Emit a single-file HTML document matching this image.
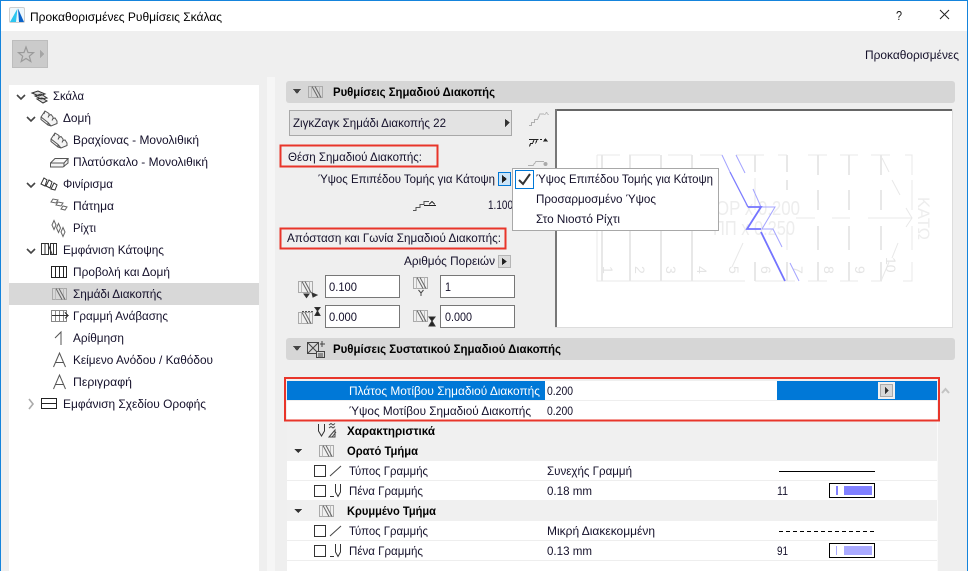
<!DOCTYPE html>
<html lang="el"><head><meta charset="utf-8"><title>Προκαθορισμένες Ρυθμίσεις Σκάλας</title>
<style>
html,body{margin:0;padding:0;width:968px;height:571px;overflow:hidden;background:#f0f0f0}
svg{display:block}
text{font-family:"Liberation Sans","DejaVu Sans",sans-serif;font-size:12px;fill:#14102a}
.b{font-weight:bold;fill:#000}
.w{fill:#fff}
.p{fill:none;stroke:#e8e8e8;stroke-width:1}
.p2{fill:none;stroke:#e8e8e8;stroke-width:2}
.t{fill:none;stroke:#a4a4ff;stroke-width:1}
.d{fill:#e4e4e4;font-size:14px}
</style></head>
<body>
<svg width="968" height="571" viewBox="0 0 968 571" xmlns="http://www.w3.org/2000/svg" shape-rendering="crispEdges">
<defs>
<g id="brk" shape-rendering="geometricPrecision"><rect x="0.5" y="0.5" width="14" height="11" fill="none" stroke="#aaa"/><path d="M3.500 .5V11.500M11.500 .5V11.500" stroke="#bbb" fill="none"/><path d="M4 .5L10 11.500M7 .5L13 11.500" stroke="#666" fill="none"/></g>
<g id="stair" shape-rendering="geometricPrecision" fill="#f4f4f4" stroke="#555"><path d="M1 7L5 1L9 3.500V5.500L11 4.500L13 7V8.500L15 8L17 11V13.500L11 16L8 15L1 9.500Z"/><path d="M1 7L8 12.500L11 16M8 12.500L8 15M5 1L4 4M9 5.500L8 7.500M13 8.500L12 10.500" fill="none"/></g>
<g id="chev" shape-rendering="geometricPrecision"><path d="M0 0L4 4L8 0" fill="none" stroke="#444" stroke-width="1.600"/></g>
<g id="cb"><rect x="314.500" y="0.500" width="11" height="11" fill="#fff" stroke="#333"/></g>
<g id="pen" shape-rendering="geometricPrecision" fill="none" stroke="#333"><path d="M5.500 0V8L8 12.500L10.500 8V0"/><path d="M0 12.500H4"/></g>
</defs>

<!-- window -->
<rect width="968" height="571" fill="#efefef"/>
<rect width="968" height="31" fill="#fff"/>
<rect x="0" y="0" width="968" height="1" fill="#1584dc"/>
<rect x="0" y="0" width="1" height="571" fill="#1584dc"/>
<rect x="967" y="0" width="1" height="571" fill="#1584dc"/>

<!-- title -->
<g shape-rendering="geometricPrecision">
<rect x="9.500" y="7.500" width="15" height="15" rx="1.500" fill="#eef8fd" stroke="#cfcfcf"/>
<path d="M10 22L17.500 8.500L16 22Z" fill="#2cc6f0"/>
<path d="M18 8.500L24 22H19Z" fill="#0a62c8"/>
</g>
<text x="30" y="21" textLength="192" lengthAdjust="spacingAndGlyphs" style="fill:#000">Προκαθορισμένες Ρυθμίσεις Σκάλας</text>
<text x="896" y="20" style="font-size:13px;fill:#111" textLength="6" lengthAdjust="spacingAndGlyphs">?</text>
<path d="M940 10L949 19M949 10L940 19" stroke="#222" fill="none" shape-rendering="geometricPrecision"/>

<!-- star button -->
<rect x="12.500" y="40.500" width="35" height="27" fill="#cbcbcb" stroke="#bdbdbd"/>
<path d="M26 47L28 52.500L33.500 52.700L29.300 56.200L30.800 61.500L26 58.500L21.200 61.500L22.700 56.200L18.500 52.700L24 52.500Z" fill="none" stroke="#9a9a9a" stroke-width="1.200" shape-rendering="geometricPrecision"/>
<path d="M40 50L44 54L40 58Z" fill="#a5a5a5"/>
<text x="865" y="59" textLength="94" lengthAdjust="spacingAndGlyphs">Προκαθορισμένες</text>

<!-- tree -->
<rect x="9" y="85" width="250" height="486" fill="#fff"/>
<rect x="9" y="283" width="250" height="22" fill="#d8d8d8"/>
<rect x="267" y="77" width="8" height="494" fill="#f6f6f6"/>

<use href="#chev" x="17" y="95"/>
<use href="#chev" x="27" y="117"/>
<use href="#chev" x="27" y="183"/>
<use href="#chev" x="27" y="249"/>
<path d="M29 399L33 404L29 409" fill="none" stroke="#aaa" stroke-width="1.600" shape-rendering="geometricPrecision"/>

<g shape-rendering="geometricPrecision" fill="none" stroke="#333">
<path d="M32 93L38 91L45 94L39 96ZM35 96L41 94L47 98L41 99ZM37 99L42 98L47 101L43 103Z" fill="#ddd"/>
<path d="M41 184L44 178L47 180L45 186ZM46 186L49 180L52 182L50 188ZM51 189L54 183L57 185L55 190Z" stroke="#333"/>
<path d="M51 202L53 199L58 200L56 203ZM56 205L58 202L63 203L61 206ZM61 209L63 206L67 207L65 210Z" stroke="#666"/>
<path d="M54 220.500L56 225L54 229.500L52 225ZM58.500 223.500L60.500 228L58.500 232.500L56.500 228ZM63 227.500L65 232L63 236.500L61 232Z" stroke="#666"/>
<path d="M55 338L61 332V345" stroke="#555"/>
<path d="M53.500 367L59.500 353L65.500 367M55.500 362.500H63.500" stroke="#555"/>
<path d="M53.500 389L59.500 375L65.500 389M55.500 384.500H63.500" stroke="#555"/>
</g>
<use href="#stair" x="40" y="110"/>
<use href="#stair" x="50" y="132"/>
<g shape-rendering="geometricPrecision" fill="none" stroke="#555"><path d="M50.500 163L55 158.500H68L64 163H50.500V167H63L68 163V158.500M64 163V167" fill="#f4f4f4"/></g>
<g fill="none" stroke="#333"><path d="M41.500 243.500V254.500H48.500V243.500ZM45 244V254M50.500 243.500H56.500V254.500H50.500ZM53.500 244V254"/></g>
<path d="M48 244L52 254" fill="none" stroke="#333" shape-rendering="geometricPrecision"/>
<g fill="none" stroke="#222"><rect x="51.500" y="266.500" width="15" height="11"/><path d="M55.500 267V277M59.500 267V277M63.500 267V277"/></g>
<use href="#brk" x="52" y="288"/>
<g fill="none" stroke="#888"><rect x="51.500" y="310.500" width="15" height="11"/><path d="M55.500 311V321M59.500 311V321M63.500 311V321"/></g>
<path d="M52 315.500H68L65 312.500M68 315.500L65 318.500" fill="none" stroke="#333"/>
<g fill="none" stroke="#222"><rect x="41.500" y="398.500" width="15" height="10"/><path d="M42 403.500H56"/></g>

<text x="53" y="100" textLength="31" lengthAdjust="spacingAndGlyphs">Σκάλα</text>
<text x="63" y="122" textLength="28" lengthAdjust="spacingAndGlyphs">Δομή</text>
<text x="73" y="144" textLength="126" lengthAdjust="spacingAndGlyphs">Βραχίονας - Μονολιθική</text>
<text x="73" y="166" textLength="135" lengthAdjust="spacingAndGlyphs">Πλατύσκαλο - Μονολιθική</text>
<text x="63" y="188" textLength="50" lengthAdjust="spacingAndGlyphs">Φινίρισμα</text>
<text x="73" y="210" textLength="41" lengthAdjust="spacingAndGlyphs">Πάτημα</text>
<text x="73" y="232" textLength="23" lengthAdjust="spacingAndGlyphs">Ρίχτι</text>
<text x="63" y="254" textLength="101" lengthAdjust="spacingAndGlyphs">Εμφάνιση Κάτοψης</text>
<text x="73" y="276" textLength="97" lengthAdjust="spacingAndGlyphs">Προβολή και Δομή</text>
<text x="73" y="298" textLength="89" lengthAdjust="spacingAndGlyphs">Σημάδι Διακοπής</text>
<text x="73" y="320" textLength="95" lengthAdjust="spacingAndGlyphs">Γραμμή Ανάβασης</text>
<text x="73" y="342" textLength="51" lengthAdjust="spacingAndGlyphs">Αρίθμηση</text>
<text x="73" y="364" textLength="140" lengthAdjust="spacingAndGlyphs">Κείμενο Ανόδου / Καθόδου</text>
<text x="73" y="386" textLength="59" lengthAdjust="spacingAndGlyphs">Περιγραφή</text>
<text x="63" y="408" textLength="143" lengthAdjust="spacingAndGlyphs">Εμφάνιση Σχεδίου Οροφής</text>

<!-- header 1 -->
<rect x="286" y="81" width="669" height="22" rx="3" fill="#d6d6d6" shape-rendering="geometricPrecision"/>
<path d="M293 89H301L297 94Z" fill="#444"/>
<use href="#brk" x="308" y="86"/>
<text class="b" x="333" y="96" textLength="162" lengthAdjust="spacingAndGlyphs">Ρυθμίσεις Σημαδιού Διακοπής</text>

<!-- dropdown -->
<rect x="289.500" y="110.500" width="222" height="25" fill="#e3e3e3" stroke="#a8a8a8"/>
<text x="293" y="127" textLength="153" lengthAdjust="spacingAndGlyphs">ZιγκZαγκ Σημάδι Διακοπής 22</text>
<path d="M505 119L510 122.500L505 127Z" fill="#333"/>

<!-- side icons -->
<g fill="none">
<path d="M529 125.500H531.500V122.500H534.500V119.500H537.500L540 114H544" stroke="#b0b0b0"/>
<path d="M544.500 115L546.500 112.500L548.500 115" stroke="#b8b8b8"/>
<path d="M529 139.500H538.500M540 139.500H542" stroke="#222"/>
<path d="M534 140L532.500 143.500H530.500L529.500 146.500M537 140L535.500 143.500" stroke="#222"/>
<path d="M543 141.500L545.500 138L548 141.500Z" fill="#222"/>
<path d="M528 165.500H533L536 161.500H544" stroke="#b0b0b0"/>
<circle cx="545.500" cy="164" r="2" fill="#aaa" shape-rendering="geometricPrecision"/>
</g>

<!-- preview -->
<rect x="555" y="109" width="398" height="219" fill="#fff"/>
<rect x="555" y="109" width="398" height="2" fill="#666"/>
<rect x="555" y="109" width="2" height="219" fill="#777"/>
<rect x="952" y="109" width="1" height="219" fill="#ddd"/>
<rect x="555" y="327" width="398" height="1" fill="#ddd"/>
<g>
<path class="p" d="M597 155H620M629 155H660M668 155H692M700 155H722M736 155H764M778 155H787M808 155H827M840 155H858M871 155H890M905 155H912V175M912 180V210M912 226V250M912 262V281H903M882 281H871M858 281H840M827 281H808M795 281H755M745 281H597V155"/>
<path class="p2" d="M602 155V281M630 155V172M630 180V281M661 155V281M692 155V281M755 155V172M755 262V281M787 155V172M787 180V190M787 262V281M818 155V175M818 190V210M818 226V250M818 262V281M849 155V175M849 190V210M849 226V250M849 262V281M881 155V175M881 190V210M881 226V250M881 262V281"/>
<path class="p" d="M597 218H712M796 218H815M832 218H850M868 218H912M755 178V210M787 225V250"/>
<g shape-rendering="geometricPrecision"><path class="p" d="M906 208L912 218L906 227M882 158L889 172M892 180L900 195M898 243L892 258M889 262L881 281M732 267L743 243"/></g>
<text class="d" style="font-size:20px;fill:#ededed" x="716" y="215" textLength="84" lengthAdjust="spacingAndGlyphs">ΟΡ x 0.200</text>
<text class="d" style="font-size:20px;fill:#ededed" x="713" y="235" textLength="82" lengthAdjust="spacingAndGlyphs">ΠΠ x 0.250</text>
<text class="d" style="font-size:17px;fill:#ededed" transform="translate(918,197) rotate(90)" textLength="43" lengthAdjust="spacingAndGlyphs">ΚΑΤΩ</text>
<g shape-rendering="geometricPrecision">
<text class="d" transform="translate(603,266) rotate(90)">1</text>
<text class="d" transform="translate(635,266) rotate(90)">2</text>
<text class="d" transform="translate(666,266) rotate(90)">3</text>
<text class="d" transform="translate(697,266) rotate(90)">4</text>
<text class="d" transform="translate(729,266) rotate(90)">5</text>
<text class="d" transform="translate(761,266) rotate(90)">6</text>
<text class="d" transform="translate(793,266) rotate(90)">7</text>
<text class="d" transform="translate(824,266) rotate(90)">8</text>
<text class="d" transform="translate(855,266) rotate(90)">9</text>
<text class="d" transform="translate(886,257) rotate(90)">10</text>
</g>
</g>
<g shape-rendering="geometricPrecision">
<path class="t" d="M736 155L745 173M753 189L761 207H775L762 229H773L782 247M790 263L799 281M722 155L730 172"/>
<path d="M730 172L748 207" fill="none" stroke="#7c7cff" stroke-width="1.300"/>
<path d="M748 207H761L747 229H761M761 232L785 281" fill="none" stroke="#7474ff" stroke-width="1.800"/>
</g>

<!-- left controls -->
<rect x="280.500" y="145.500" width="157" height="21" fill="none" stroke="#e8352a" stroke-width="2"/>
<text x="288" y="161" textLength="134" lengthAdjust="spacingAndGlyphs">Θέση Σημαδιού Διακοπής:</text>
<text x="318" y="183" textLength="177" lengthAdjust="spacingAndGlyphs">Ύψος Επιπέδου Τομής για Κάτοψη</text>
<rect x="498.500" y="172.500" width="12" height="13" fill="#cce4f7" stroke="#0078d7"/>
<path d="M502 175L507 179L502 183Z" fill="#222"/>
<g fill="none" stroke="#555"><path d="M413 210.500H416V207.500H420V204.500H424V201.500H429"/><path d="M424 205.500H436" stroke="#222"/><path d="M429 204.500L432 201.500L435 204.500" stroke="#333"/></g>
<text x="488" y="209" textLength="25" lengthAdjust="spacingAndGlyphs">1.100</text>

<rect x="280.500" y="228.500" width="225" height="20" fill="none" stroke="#e8352a" stroke-width="2"/>
<text x="287" y="242" textLength="214" lengthAdjust="spacingAndGlyphs">Απόσταση και Γωνία Σημαδιού Διακοπής:</text>
<text x="404" y="265" textLength="91" lengthAdjust="spacingAndGlyphs">Αριθμός Πορειών</text>
<rect x="498.500" y="255.500" width="12" height="12" fill="#dcdcdc" stroke="#b5b5b5"/>
<path d="M502 258L507 261.500L502 265Z" fill="#222"/>

<g fill="#fff" stroke="#777">
<rect x="325.500" y="275.500" width="74" height="22"/>
<rect x="440.500" y="275.500" width="74" height="22"/>
<rect x="325.500" y="305.500" width="74" height="22"/>
<rect x="440.500" y="305.500" width="74" height="22"/>
</g>
<text x="329" y="291" textLength="28" lengthAdjust="spacingAndGlyphs">0.100</text>
<text x="445" y="291" textLength="6" lengthAdjust="spacingAndGlyphs">1</text>
<text x="329" y="321" textLength="28" lengthAdjust="spacingAndGlyphs">0.000</text>
<text x="445" y="321" textLength="27" lengthAdjust="spacingAndGlyphs">0.000</text>
<use href="#brk" x="298" y="281"/>
<path d="M304 294L306.500 297.500L309 294ZM312 293L317 295L313 297Z" fill="#333" stroke="#333" shape-rendering="geometricPrecision"/>
<use href="#brk" x="413" y="277"/>
<path d="M418.500 290L421 293L423.500 290M421 293V296" fill="none" stroke="#444" shape-rendering="geometricPrecision"/>
<use href="#brk" x="298" y="312"/>
<path d="M302 311.500H314" fill="none" stroke="#555" stroke-dasharray="2 1"/>
<path d="M315 307.500H320L317.500 311L320 315.500H315L317.500 311Z" fill="#222" stroke="#333" shape-rendering="geometricPrecision"/>
<use href="#brk" x="413" y="310"/>
<path d="M429 317H435L432 321L435 326H429L432 321Z" fill="#222" stroke="#333" shape-rendering="geometricPrecision"/>

<!-- header 2 -->
<rect x="286" y="338" width="669" height="22" rx="3" fill="#d6d6d6" shape-rendering="geometricPrecision"/>
<path d="M293 346H301L297 351Z" fill="#444"/>
<g fill="none" stroke="#444" shape-rendering="geometricPrecision"><rect x="307.500" y="342.500" width="11" height="11"/><path d="M308 343L318 353M318 343L308 353"/><rect x="316.500" y="351.500" width="8" height="6" fill="#d6d6d6"/><path d="M318 354H323M318 356H323M320 344H325M322 341V347"/></g>
<text class="b" x="333" y="353" textLength="228" lengthAdjust="spacingAndGlyphs">Ρυθμίσεις Συστατικού Σημαδιού Διακοπής</text>

<!-- table -->
<rect x="287" y="381" width="650" height="190" fill="#fff"/>
<rect x="937" y="421" width="1" height="150" fill="#fafafa"/>
<rect x="287" y="381" width="258" height="19" fill="#0078d7"/>
<rect x="777" y="381" width="160" height="19" fill="#0078d7"/>
<rect x="287" y="400" width="650" height="1" fill="#eee"/>
<rect x="287" y="421" width="650" height="40" fill="#f0f0f0"/>
<rect x="287" y="480" width="650" height="1" fill="#eee"/>
<rect x="287" y="500" width="650" height="21" fill="#f0f0f0"/>
<rect x="287" y="540" width="650" height="1" fill="#eee"/>
<rect x="287" y="560" width="650" height="1" fill="#eee"/>

<rect x="285" y="378" width="654" height="42.500" fill="none" stroke="#e8352a" stroke-width="2"/>

<text class="w" x="349" y="395" textLength="191" lengthAdjust="spacingAndGlyphs">Πλάτος Μοτίβου Σημαδιού Διακοπής</text>
<text x="547" y="395" textLength="26" lengthAdjust="spacingAndGlyphs">0.200</text>
<rect x="878" y="382" width="17" height="17" fill="#f0f0f0"/>
<rect x="880.500" y="384.500" width="12" height="12" fill="#d8d8d8" stroke="#aaa"/>
<path d="M885 387V394L889 390.500Z" fill="#333"/>
<path d="M942 393L945.500 389L949 393" fill="none" stroke="#c4c4c4" stroke-width="2" shape-rendering="geometricPrecision"/>
<text x="349" y="415" textLength="182" lengthAdjust="spacingAndGlyphs">Ύψος Μοτίβου Σημαδιού Διακοπής</text>
<text x="547" y="415" textLength="26" lengthAdjust="spacingAndGlyphs">0.200</text>

<g fill="none" stroke="#333" shape-rendering="geometricPrecision"><path d="M318.500 424V431L321.500 436L324.500 431V424"/><path d="M329 437L335 430V437ZM332 437L336 432M329 425L331 423.500L333 425L335 423.500M329 428L331 426.500L333 428L335 426.500" stroke="#444"/></g>
<text class="b" x="347" y="435" textLength="88" lengthAdjust="spacingAndGlyphs">Χαρακτηριστικά</text>

<path d="M294 449H302L298 453Z" fill="#333"/>
<use href="#brk" x="319" y="445"/>
<text class="b" x="347" y="455" textLength="71" lengthAdjust="spacingAndGlyphs">Ορατό Τμήμα</text>

<use href="#cb" y="465"/>
<path d="M330 476L341 466" stroke="#444" fill="none" shape-rendering="geometricPrecision"/>
<text x="349" y="475" textLength="79" lengthAdjust="spacingAndGlyphs">Τύπος Γραμμής</text>
<text x="547" y="475" textLength="85" lengthAdjust="spacingAndGlyphs">Συνεχής Γραμμή</text>
<rect x="779" y="471" width="96" height="1" fill="#000"/>

<use href="#cb" y="485"/>
<use href="#pen" x="330" y="484"/>
<text x="349" y="495" textLength="74" lengthAdjust="spacingAndGlyphs">Πένα Γραμμής</text>
<text x="547" y="495" textLength="45" lengthAdjust="spacingAndGlyphs">0.18 mm</text>
<text x="777" y="495" textLength="11" lengthAdjust="spacingAndGlyphs">11</text>
<rect x="829.500" y="483.500" width="45" height="14" fill="#fff" stroke="#000"/>
<rect x="836" y="486" width="2" height="9" fill="#8080ff"/>
<rect x="844" y="486" width="28" height="9" fill="#8080ff"/>

<path d="M294 509H302L298 513Z" fill="#333"/>
<use href="#brk" x="319" y="505"/>
<text class="b" x="347" y="515" textLength="89" lengthAdjust="spacingAndGlyphs">Κρυμμένο Τμήμα</text>

<use href="#cb" y="525"/>
<path d="M330 536L341 526" stroke="#444" fill="none" shape-rendering="geometricPrecision"/>
<text x="349" y="535" textLength="79" lengthAdjust="spacingAndGlyphs">Τύπος Γραμμής</text>
<text x="547" y="535" textLength="108" lengthAdjust="spacingAndGlyphs">Μικρή Διακεκομμένη</text>
<path d="M779 531.500H875" stroke="#000" stroke-dasharray="4 3" fill="none"/>

<use href="#cb" y="545"/>
<use href="#pen" x="330" y="544"/>
<text x="349" y="555" textLength="74" lengthAdjust="spacingAndGlyphs">Πένα Γραμμής</text>
<text x="547" y="555" textLength="45" lengthAdjust="spacingAndGlyphs">0.13 mm</text>
<text x="777" y="555" textLength="11" lengthAdjust="spacingAndGlyphs">91</text>
<rect x="829.500" y="543.500" width="45" height="14" fill="#fff" stroke="#000"/>
<rect x="836" y="546" width="1" height="9" fill="#aaaaff"/>
<rect x="844" y="546" width="28" height="9" fill="#aaaaff"/>

<!-- popup -->
<rect x="512.500" y="168.500" width="206" height="62" fill="#fff" stroke="#a8a8a8"/>
<rect x="515.500" y="170.500" width="18" height="18" fill="#fff" stroke="#0078d7"/>
<path d="M519 180L523 184L530 174" fill="none" stroke="#333" stroke-width="2" shape-rendering="geometricPrecision"/>
<text x="536" y="183" textLength="177" lengthAdjust="spacingAndGlyphs">Ύψος Επιπέδου Τομής για Κάτοψη</text>
<text x="536" y="203" textLength="120" lengthAdjust="spacingAndGlyphs">Προσαρμοσμένο Ύψος</text>
<text x="536" y="223" textLength="84" lengthAdjust="spacingAndGlyphs">Στο Νιοστό Ρίχτι</text>
</svg>
</body></html>
